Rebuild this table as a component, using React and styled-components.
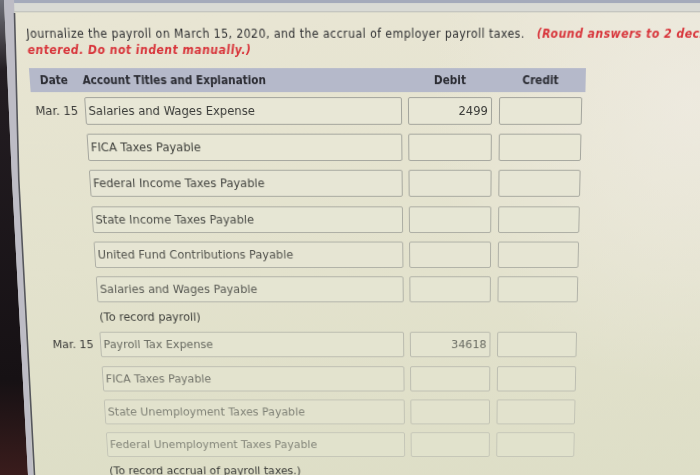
import React from "react";
import styled, { createGlobalStyle } from "styled-components";

const GlobalStyle = createGlobalStyle`
  html, body { margin: 0; padding: 0; background: #1a1518; }
  #root { width: 700px; height: 475px; }
`;

const hex = (h) => [1, 3, 5].map((i) => parseInt(h.slice(i, i + 2), 16));
const mix = (a, b, t) => {
  const A = hex(a);
  const B = hex(b);
  return `rgb(${A.map((v, i) => Math.round(v + (B[i] - v) * t)).join(",")})`;
};

const Stage = styled.div`
  position: relative;
  width: 700px;
  height: 475px;
  overflow: hidden;
  background: #1a1518;
`;

const Screen = styled.div`
  width: 800px;
  height: 580px;
  display: flex;
  flex-direction: column;
  transform-origin: 454px 110px;
  transform: perspective(800px) rotateX(-8deg);
  font-family: "DejaVu Sans", Verdana, sans-serif;
`;

const TopStrip = styled.div`
  height: 4px;
  background: #a4aabb;
  flex: none;
`;

const WindowBar = styled.div`
  height: 8px;
  background: #d9dad5;
  border-bottom: 1px solid #bdbfb9;
  flex: none;
`;

const Page = styled.div`
  flex: 1;
  padding: 13px 0 0 32px;
  background:
    radial-gradient(ellipse 260px 300px at 690px 90px, rgba(239, 235, 226, 0.8), rgba(239, 235, 226, 0) 100%),
    linear-gradient(180deg, #e8e5d3 0%, #e3e2cd 45%, #dcddc5 100%);
  display: flex;
  flex-direction: column;
`;

const Prompt = styled.div`
  font-stretch: condensed;
  font-size: 12px;
  letter-spacing: 0.45px;
  line-height: 16px;
  color: #2e2f31;
  white-space: nowrap;
`;

const Red = styled.span`
  color: #d8353b;
  font-weight: bold;
  font-style: italic;
  margin-left: ${(p) => p.$lead || 0}px;
`;

const Journal = styled.div`
  margin-top: 10px;
  width: 553px;
  display: flex;
  flex-direction: column;
  gap: 9.2px;
`;

const cols = "46px 317px 84px 83px";

const HeaderBar = styled.div`
  height: 24px;
  margin-bottom: -4.2px;
  display: grid;
  grid-template-columns: ${cols};
  column-gap: 6.5px;
  align-items: center;
  background: #b5b9ca;
  font-stretch: condensed;
  font-weight: bold;
  font-size: 11.6px;
  color: #2b2c33;
`;

const HeadCell = styled.div`
  text-align: ${(p) => p.$align || "left"};
  padding-left: ${(p) => p.$pad || 0}px;
  white-space: nowrap;
`;

const Row = styled.div`
  height: 28px;
  display: grid;
  grid-template-columns: ${cols};
  column-gap: 6.5px;
  align-items: stretch;
`;

const DateCell = styled.div`
  font-size: 11.5px;
  color: #3a3a38;
  text-align: right;
  padding-top: 7px;
  white-space: nowrap;
`;

const Field = styled.div`
  box-sizing: border-box;
  border: 1px solid ${(p) => mix("#a3a49c", "#cdcebe", p.$fade)};
  border-radius: 2px;
  background: ${(p) => mix("#e8e7d6", "#dfe0c9", p.$fade)};
  display: flex;
  align-items: center;
  justify-content: ${(p) => (p.$num ? "flex-end" : "flex-start")};
  padding: 0 ${(p) => (p.$num ? 3 : 0)}px 0 ${(p) => (p.$num ? 0 : 3)}px;
  font-size: 11.6px;
  color: ${(p) => mix("#3a3b38", "#9a9c8e", p.$fade)};
  white-space: nowrap;
`;

const Note = styled.div`
  font-size: 11.6px;
  line-height: 14px;
  padding-left: 54px;
  color: #3d3e3a;
  white-space: nowrap;
`;

const Bezel = styled.svg`
  position: absolute;
  left: 0;
  top: 0;
  width: 60px;
  height: 475px;
  z-index: 2;
`;

const block1 = [
  { date: "Mar. 15", account: "Salaries and Wages Expense", debit: "2499", fade: 0 },
  { account: "FICA Taxes Payable", fade: 0.05 },
  { account: "Federal Income Taxes Payable", fade: 0.1 },
  { account: "State Income Taxes Payable", fade: 0.18 },
  { account: "United Fund Contributions Payable", fade: 0.26 },
  { account: "Salaries and Wages Payable", fade: 0.32 },
];

const block2 = [
  { date: "Mar. 15", account: "Payroll Tax Expense", debit: "34618", fade: 0.5 },
  { account: "FICA Taxes Payable", fade: 0.58 },
  { account: "State Unemployment Taxes Payable", fade: 0.72 },
  { account: "Federal Unemployment Taxes Payable", fade: 0.78 },
];

function EntryRow({ date, account, debit, fade }) {
  return (
    <Row>
      <DateCell>{date || ""}</DateCell>
      <Field $fade={fade}>{account}</Field>
      <Field $fade={fade} $num>{debit || ""}</Field>
      <Field $fade={fade} $num />
    </Row>
  );
}

export default function App() {
  return (
    <>
      <GlobalStyle />
      <Stage>
        <Screen>
          <TopStrip />
          <WindowBar />
          <Page>
            <Prompt>
              Journalize the payroll on March 15, 2020, and the accrual of employer payroll taxes.{" "}
              <Red $lead={8}>
                (Round answers to 2 decimal places, e.g. 5,275.15. Credit account titles are automatically indented when amount is
              </Red>
            </Prompt>
            <Prompt>
              <Red>entered. Do not indent manually.)</Red>
            </Prompt>
            <Journal>
              <HeaderBar>
                <HeadCell $pad={10}>Date</HeadCell>
                <HeadCell>Account Titles and Explanation</HeadCell>
                <HeadCell $align="center">Debit</HeadCell>
                <HeadCell $align="center">Credit</HeadCell>
              </HeaderBar>
              {block1.map((r, i) => (
                <EntryRow key={"a" + i} {...r} />
              ))}
              <Note>(To record payroll)</Note>
              {block2.map((r, i) => (
                <EntryRow key={"b" + i} {...r} />
              ))}
              <Note>(To record accrual of payroll taxes.)</Note>
            </Journal>
          </Page>
        </Screen>
        <Bezel viewBox="0 0 60 475" preserveAspectRatio="none">
          <defs>
            <linearGradient id="bz" x1="0" y1="0" x2="0" y2="1">
              <stop offset="0" stopColor="#6f7078" />
              <stop offset="0.15" stopColor="#231d22" />
              <stop offset="0.8" stopColor="#161114" />
              <stop offset="1" stopColor="#3a1c1c" />
            </linearGradient>
          </defs>
          <polygon points="0,0 14,0 19,180 34,475 0,475" fill="#c9cbc6" />
          <polygon points="0,0 4,0 12,180 28,475 0,475" fill="url(#bz)" />
          <polygon points="4,0 14,0 18,180 33,475 28,475 12,180" fill="#bdbcc5" />
          <polyline points="14.5,13 18.8,180 34.5,475" fill="none" stroke="#55565c" strokeWidth="1.6" />
        </Bezel>
      </Stage>
    </>
  );
}
